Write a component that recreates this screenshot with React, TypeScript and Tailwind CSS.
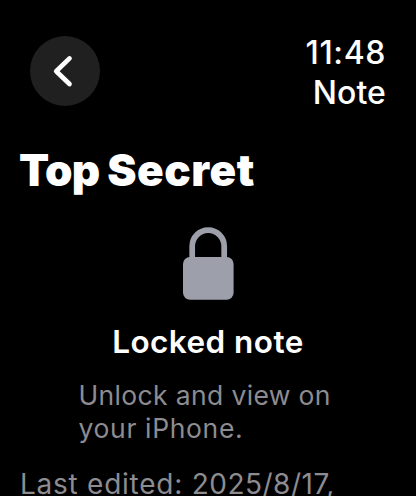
export default function App() {
  return (
    <main className="h-[496px] w-[416px] overflow-hidden bg-black font-['Inter',sans-serif] text-white">
      <header className="flex h-[142px] items-start justify-between pt-9 pr-[30px] pl-[30px]">
        <button aria-label="Back" className="flex size-[70px] items-center justify-center rounded-full bg-[#202020]">
          <svg width="70" height="70" viewBox="0 0 70 70" fill="none" stroke="white" strokeWidth="4.7" strokeLinecap="round" strokeLinejoin="round">
            <path d="M39.5 22.4 26.2 35.2l13.3 12.8" />
          </svg>
        </button>
        <div className="-mt-[3px] text-right text-[32px] leading-10 font-medium">
          <div className="tracking-[0.6px]">11:48</div>
          <div className="tracking-[0.1px]">Note</div>
        </div>
      </header>
      <h1 className="pl-[19px] text-[44px] leading-[56px] font-black tracking-[-0.8px] whitespace-nowrap">
        Top <span className="tracking-[0.5px]">Secret</span>
      </h1>
      <section className="flex flex-col items-center pt-[29px]">
        <svg width="52" height="74" viewBox="0 0 52 74">
          <path d="M10.2 35V19.2a16 16 0 0 1 32 0V35" fill="none" stroke="#9d9fab" strokeWidth="5.7" />
          <rect x="1" y="30" width="50.6" height="42.8" rx="7" fill="#9d9fab" />
        </svg>
        <h2 className="mt-[21px] text-[31.5px] leading-10 font-semibold tracking-[0.45px] whitespace-nowrap">Locked note</h2>
        <p className="mt-[17px] w-[259px] text-[26.5px] leading-[33px] tracking-[0.35px] whitespace-nowrap text-[#8c8c91]">
          Unlock and view on
          <br />
          <span className="tracking-[0.65px]">your iPhone.</span>
        </p>
      </section>
      <p className="mt-[23px] pl-5 text-[28px] leading-[33px] whitespace-nowrap text-[#8c8c91]">
        <span className="tracking-[0.75px]">Last edited: </span>
        <span className="tracking-[0.5px]">2025/8/17,</span>
      </p>
    </main>
  );
}
